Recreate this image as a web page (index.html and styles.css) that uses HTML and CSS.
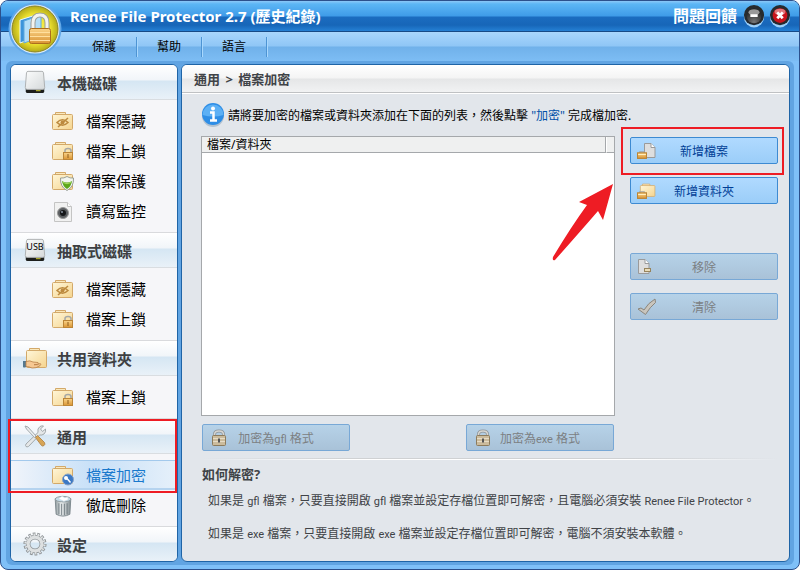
FILE: index.html
```
<!DOCTYPE html>
<html lang="zh-Hant">
<head>
  <meta charset="UTF-8">
  <title>Renee File Protector 2.7</title>
  <link rel="stylesheet" href="styles.css">
</head>
<body>
  <!-- shared icons -->
  <svg class="defs" aria-hidden="true">
    <defs>
      <linearGradient id="g-folder" x1="0" y1="0" x2="1" y2="1">
        <stop offset="0" stop-color="#fff6d8"/>
        <stop offset="1" stop-color="#f5d48e"/>
      </linearGradient>
      <linearGradient id="g-disk" x1="0" y1="0" x2="1" y2="1">
        <stop offset="0" stop-color="#fbfcfc"/>
        <stop offset="1" stop-color="#d5d9da"/>
      </linearGradient>
      <linearGradient id="g-gold" x1="0" y1="0" x2="0" y2="1">
        <stop offset="0" stop-color="#fbd489"/>
        <stop offset="1" stop-color="#d99434"/>
      </linearGradient>
      <linearGradient id="g-can" x1="0" y1="0" x2="1" y2="0">
        <stop offset="0" stop-color="#8d989c"/>
        <stop offset="0.4" stop-color="#eef1f2"/>
        <stop offset="1" stop-color="#7f8a8f"/>
      </linearGradient>
      <radialGradient id="g-logo" cx="0.5" cy="0.5" r="0.55">
        <stop offset="0" stop-color="#fff566"/>
        <stop offset="0.6" stop-color="#ece02e"/>
        <stop offset="1" stop-color="#a39a12"/>
      </radialGradient>
      <radialGradient id="g-dark" cx="0.5" cy="0.9" r="0.9">
        <stop offset="0" stop-color="#777"/>
        <stop offset="1" stop-color="#151515"/>
      </radialGradient>
    </defs>
    <symbol id="disk" viewBox="0 0 24 26">
      <path d="M2 20h20v3q0 2-2 2H4q-2 0-2-2z" fill="#1c1e1c"/>
      <path d="M13 22h5" stroke="#a7a52c" stroke-width="2"/>
      <path d="M4.500 1.500h15q1.500 0 1.700 1.500l1.300 16q0 2-2 2h-17q-2 0-2-2L2.800 3Q3 1.500 4.500 1.500z" fill="url(#g-disk)" stroke="#a9adae"/>
    </symbol>
    <symbol id="folder" viewBox="0 0 24 22">
      <path d="M4.500 5V1.500h10V5" fill="#fbe9bd" stroke="#d3a96a"/>
      <rect x="1.500" y="3.500" width="20" height="15" rx="1" fill="url(#g-folder)" stroke="#d3a96a"/>
    </symbol>
    <symbol id="lock" viewBox="0 0 18 18">
      <path d="M4.500 8V5.500Q4.500 2 9 2t4.500 3.500V8" fill="none" stroke="#8f9498" stroke-width="3"/>
      <path d="M4.500 8V5.500Q4.500 2 9 2t4.500 3.500V8" fill="none" stroke="#d6d6d2" stroke-width="1.500"/>
      <rect x="2.500" y="6.500" width="13" height="10" rx="1" fill="#cbbb9c" stroke="#8c7b5c"/>
      <path d="M3 9.500h12M3 12.500h12" stroke="#e6dcc6"/>
      <path d="M9 9.500v4" stroke="#555" stroke-width="2"/>
    </symbol>
    <symbol id="folder-hide" viewBox="0 0 24 22">
      <use href="#folder" width="24" height="22"/>
      <path d="M6 11.500q5.500-5.500 11 0q-5.500 5.500-11 0z" fill="none" stroke="#bd8a3e" stroke-width="1.500"/>
      <circle cx="11.500" cy="11.500" r="2" fill="#bd8a3e"/>
      <path d="M7 16l10-9" stroke="#bd8a3e" stroke-width="1.500"/>
    </symbol>
    <symbol id="folder-lock" viewBox="0 0 24 22">
      <use href="#folder" width="24" height="22"/>
      <path d="M14 12v-2.500q0-2 3-2t3 2V12" fill="none" stroke="#a5a7a5" stroke-width="1.500"/>
      <rect x="12.500" y="11.500" width="9" height="7" fill="url(#g-gold)" stroke="#bb8537"/>
      <path d="M17 13v4" stroke="#8f5f1e"/>
    </symbol>
    <symbol id="folder-shield" viewBox="0 0 24 22">
      <use href="#folder" width="24" height="22"/>
      <path d="M16 5.500q3 2 6.500 1.500q.5 9-6.500 12.500q-7-3.500-6.500-12.500q3.500.5 6.500-1.500z" fill="#f2f5f0" stroke="#999f97"/>
      <path d="M11 10q5 3 10 0q-.5 5-5 8q-4.500-3-5-8z" fill="#5da61c"/>
      <path d="M12 11.500q4 2.500 8 0" stroke="#a9dd62" fill="none"/>
    </symbol>
    <symbol id="folder-key" viewBox="0 0 24 22">
      <use href="#folder" width="24" height="22"/>
      <circle cx="17" cy="14.500" r="5.500" fill="#3b78c4" stroke="#8aa5c8"/>
      <circle cx="15" cy="13" r="2" fill="#fff"/>
      <path d="M16 13.500l3.500 4" stroke="#fff" stroke-width="1.500"/>
    </symbol>
    <symbol id="monitor" viewBox="0 0 24 22">
      <path d="M3.500 1.500h13l4 4v15h-17z" fill="#f1f1f1" stroke="#c4c4c4"/>
      <path d="M16.500 1.500v4h4" fill="#fff" stroke="#c4c4c4"/>
      <circle cx="12" cy="12" r="5.500" fill="#5a5d60" stroke="#999"/>
      <circle cx="12" cy="12" r="3" fill="#151719"/>
      <circle cx="11" cy="11" r="1" fill="#8b96a3"/>
    </symbol>
    <symbol id="bin" viewBox="2 0 20 24">
      <path d="M3.500 4l1 17q7.500 4 15 0l1-17z" fill="url(#g-can)" stroke="#7b868b"/>
      <path d="M7.500 9v12M10.500 9.500V22M13.500 9.500V22M16.500 9v12" stroke="#6f7a80"/>
      <ellipse cx="12" cy="4.500" rx="8.500" ry="3" fill="#c5dcea" stroke="#8d989d"/>
      <path d="M7 4l4-3 3 2 3-1 1 3-5 2z" fill="#fff" stroke="#b9cbd6" stroke-width=".6"/>
    </symbol>
    <symbol id="share" viewBox="0 0 26 24">
      <path d="M7.500 5V2.500h10V5" fill="#fbe9bd" stroke="#d3a96a"/>
      <rect x="4.500" y="4.500" width="20" height="17" rx="1" fill="url(#g-folder)" stroke="#d3a96a"/>
      <path d="M1 15v6q1 1 3 0v-6z" fill="#55788f"/>
      <path d="M4 15.500q4-1.500 7 .5l5 .5q1.500 1-1 2l-3 .2q4 .6 6-1.200q2 .5 0 2.200q-4 2.800-8 2.300q-3-1.500-6-1.500z" fill="#f6c893" stroke="#b98049" stroke-width=".8"/>
    </symbol>
    <symbol id="tools" viewBox="0 0 24 24">
      <path d="M3 20L15 8.500q-1-4 2-6q2-1 3.500-.5l-3 3 2 2.500 3-2.500q.8 3-1.500 5q-2 1.500-4.500 1L5.500 22.500q-1.500.7-2.500 0t0-2.500z" fill="#e4e7e8" stroke="#a3aaad"/>
      <path d="M2 2l3 1 8 9-1.500 1.500-8-8.500z" fill="#eceeef" stroke="#a3aaad"/>
      <path d="M12.500 13.500l2-2 7 7q1 2-.5 3t-2.500 0z" fill="#d7a555" stroke="#b58a50"/>
    </symbol>
    <symbol id="gear" viewBox="0 0 26 26">
      <circle cx="13" cy="13" r="10.500" fill="none" stroke="#8d9295" stroke-width="4" pathLength="28" stroke-dasharray="1.200 .8"/>
      <circle cx="13" cy="13" r="7.500" fill="none" stroke="#8d9295" stroke-width="5"/>
      <circle cx="13" cy="13" r="10" fill="none" stroke="#e0e3e4" stroke-width="3" pathLength="28" stroke-dasharray=".7 1.300" stroke-dashoffset="-.25"/>
      <circle cx="13" cy="13" r="7.500" fill="none" stroke="#dde0e1" stroke-width="3.500"/>
    </symbol>
    <symbol id="smalllock" viewBox="0 0 9 8">
      <path d="M2.500 3V1.500h4V3" fill="none" stroke="#a3a3a3"/>
      <rect x=".5" y="2.500" width="8" height="5" fill="url(#g-gold)" stroke="#bb8537"/>
      <path d="M1 4h7" stroke="#fff0c0"/>
    </symbol>
    <symbol id="page" viewBox="0 0 13 15">
      <path d="M1.500.5H8l4 4v10H1.500z" fill="#dedede" stroke="#9a9a9a"/>
      <path d="M8 .5v4h4" fill="#fff" stroke="#9a9a9a"/>
    </symbol>
  </svg>

  <div class="window">
    <header class="titlebar">
      <h1>Renee File Protector 2.7 (歷史紀錄)</h1>
      <a class="feedback" href="#">問題回饋</a>
      <button class="winbtn" aria-label="Minimize">
        <svg viewBox="0 0 24 26"><ellipse cx="12" cy="14" rx="11" ry="11.500" fill="#9bd0fa"/><circle cx="12" cy="12" r="11" fill="#262a2e"/><circle cx="12" cy="13" r="8" fill="url(#g-dark)"/><ellipse cx="12" cy="9" rx="6" ry="3.500" fill="#999"/><path d="M8 12.500h8" stroke="#fff" stroke-width="3"/></svg>
      </button>
      <button class="winbtn" aria-label="Close">
        <svg viewBox="0 0 24 26"><ellipse cx="12" cy="14" rx="11" ry="11.500" fill="#9bd0fa"/><circle cx="12" cy="12" r="11" fill="#262a2e"/><circle cx="12" cy="12.500" r="8" fill="#c9141b"/><ellipse cx="12" cy="8.500" rx="6" ry="3.500" fill="#e0777a"/><path d="M9 9l6 6.500M15 9l-6 6.500" stroke="#fff" stroke-width="3"/></svg>
      </button>
    </header>
    <svg class="logo" viewBox="0 0 54 54">
      <circle cx="27" cy="27" r="26.500" fill="#62a8e8"/>
      <circle cx="27" cy="27" r="24.500" fill="#dcecf8"/>
      <circle cx="27" cy="27" r="23" fill="url(#g-logo)" stroke="#8b8524"/>
      <path d="M12 18l16-5v22l-16 6z" fill="#3d94da" stroke="#eaf6ff"/>
      <path d="M16 19l17-6v22l-17 6z" fill="#b4def8" stroke="#5fa9de"/>
      <path d="M25 27v-6q0-8 7-8t7 8v6" fill="none" stroke="#9b9d98" stroke-width="5"/>
      <path d="M25 27v-6q0-8 7-8t7 8v6" fill="none" stroke="#f3f3ee" stroke-width="3"/>
      <rect x="21.500" y="26.500" width="21" height="15" rx="2" fill="url(#g-gold)" stroke="#ad6d1d"/>
      <path d="M22 30.500h20M22 34.500h20M22 38.500h20" stroke="#ffdf9e"/>
    </svg>
    <nav class="menubar">
      <button>保護</button>
      <button>幫助</button>
      <button>語言</button>
    </nav>

    <div class="body">
      <aside class="panel sidebar">
        <section class="group">
          <h2><svg class="head-icon"><use href="#disk"/></svg>本機磁碟</h2>
          <ul>
            <li><a href="#"><svg><use href="#folder-hide"/></svg>檔案隱藏</a></li>
            <li><a href="#"><svg><use href="#folder-lock"/></svg>檔案上鎖</a></li>
            <li><a href="#"><svg><use href="#folder-shield"/></svg>檔案保護</a></li>
            <li><a href="#"><svg><use href="#monitor"/></svg>讀寫監控</a></li>
          </ul>
        </section>
        <section class="group">
          <h2><span class="usb"><svg class="head-icon"><use href="#disk"/></svg><span>USB</span></span>抽取式磁碟</h2>
          <ul>
            <li><a href="#"><svg><use href="#folder-hide"/></svg>檔案隱藏</a></li>
            <li><a href="#"><svg><use href="#folder-lock"/></svg>檔案上鎖</a></li>
          </ul>
        </section>
        <section class="group">
          <h2><svg class="head-icon"><use href="#share"/></svg>共用資料夾</h2>
          <ul>
            <li><a href="#"><svg><use href="#folder-lock"/></svg>檔案上鎖</a></li>
          </ul>
        </section>
        <section class="group marked">
          <h2><svg class="head-icon"><use href="#tools"/></svg>通用</h2>
          <ul>
            <li><a class="active" href="#"><svg><use href="#folder-key"/></svg>檔案加密</a></li>
            <li><a href="#"><svg><use href="#bin"/></svg>徹底刪除</a></li>
          </ul>
        </section>
        <section class="group">
          <h2><svg class="head-icon"><use href="#gear"/></svg>設定</h2>
        </section>
      </aside>

      <main class="panel main">
        <div class="crumbs">通用 <span>&gt;</span> 檔案加密</div>
        <div class="content">
          <p class="info">
            <svg viewBox="0 0 24 26"><ellipse cx="12" cy="14" rx="11" ry="11" fill="#b3c2d0"/><circle cx="12" cy="12" r="11" fill="#2e8ee6"/><path d="M1.500 13a10.500 10.500 0 0 1 21 0q-10 3-21 0z" fill="#5cb0f5"/><circle cx="12" cy="6.500" r="2" fill="#fff"/><path d="M9 10.500h3.500V18M9 18.500h7" stroke="#fff" stroke-width="2.500" fill="none"/></svg>
            <span>請將要加密的檔案或資料夾添加在下面的列表，然後點擊 <b>"加密"</b> 完成檔加密.</span>
          </p>
          <div class="work">
            <div class="list">
              <table>
                <thead><tr><th>檔案/資料夾</th><td></td></tr></thead>
              </table>
              <svg class="pointer" viewBox="0 0 62 78"><path d="M61 1L51 37l-5-9Q27 50 3 77q-3 1-2-3Q19 44 35 22l-8-3z" fill="#ee1c24"/></svg>
            </div>
            <div class="actions">
              <button class="btn marked">
                <svg viewBox="0 0 20 18"><use href="#page" x="6" y="1" width="13" height="15"/><use href="#smalllock" x="0" y="8" width="10" height="9"/></svg>
                <span>新增檔案</span>
              </button>
              <button class="btn">
                <svg viewBox="0 0 20 18"><use href="#folder" x="2" y="1" width="18" height="16"/><use href="#smalllock" x="0" y="8" width="10" height="9"/></svg>
                <span>新增資料夾</span>
              </button>
              <button class="btn remove" disabled>
                <svg viewBox="0 0 20 18"><use href="#page" x="0" y="1" width="13" height="15"/><rect x="7.500" y="10.500" width="6" height="3" fill="#e9dcba" stroke="#97845c"/></svg>
                <span>移除</span>
              </button>
              <button class="btn" disabled>
                <svg viewBox="0 0 20 18"><path d="M1 11l3-1 3 2q4-7 11-11l.5 3.500Q13 9 8.500 16.500z" fill="#c9c5bd" stroke="#8a857c"/></svg>
                <span>清除</span>
              </button>
            </div>
          </div>
          <div class="formats">
            <button class="btn" disabled><svg><use href="#lock"/></svg><span>加密為<span class="latin">gfl</span> 格式</span></button>
            <button class="btn" disabled><svg><use href="#lock"/></svg><span>加密為<span class="latin">exe</span> 格式</span></button>
          </div>
          <section class="help">
            <h3>如何解密?</h3>
            <p>如果是 <span class="latin">gfl</span> 檔案，只要直接開啟 <span class="latin">gfl</span> 檔案並設定存檔位置即可解密，且電腦必須安裝 <span class="latin">Renee File Protector</span>。</p>
            <p>如果是 <span class="latin">exe</span> 檔案，只要直接開啟 <span class="latin">exe</span> 檔案並設定存檔位置即可解密，電腦不須安裝本軟體。</p>
          </section>
        </div>
      </main>
    </div>
  </div>
</body>
</html>
```
FILE: styles.css
```
*,
*::before,
*::after {
  box-sizing: border-box;
}

body {
  margin: 0;
  background: #fff;
  font-family: "Noto Sans", "Noto Sans CJK TC", sans-serif;
  font-size: 12px;
  color: #000;
}

h1, h2, h3, p, ul {
  margin: 0;
  padding: 0;
}

a {
  color: inherit;
  text-decoration: none;
}

button {
  font: inherit;
  padding: 0;
  border: 0;
  background: none;
}

svg {
  display: block;
  flex: none;
}

.defs {
  position: absolute;
  width: 0;
  height: 0;
}

.latin {
  font-family: Roboto, sans-serif;
  font-size: 11px;
}

.window {
  position: relative;
  display: flex;
  flex-direction: column;
  min-height: 100vh;
  border: 1px solid #2c508c;
  border-radius: 8px;
  overflow: hidden;
  background: #7fc0f8;
}

/* title bar */
.titlebar {
  display: flex;
  align-items: center;
  height: 31px;
  padding: 0 8px 0 69px;
  color: #fff;
  border-bottom: 1px solid #174a86;
  background: linear-gradient(#8cc8f8 0, #5cb6f5 3px, #3f9be8 15px, #1b6cc0 16px, #1766b8 24px, #2580d4 100%);
}

.titlebar h1 {
  flex: 1;
  font-size: 15px;
  font-weight: bold;
  line-height: 24px;
}

.feedback {
  margin-right: 4px;
  font-size: 16px;
  font-weight: bold;
  line-height: 24px;
}

.winbtn {
  width: 22px;
  height: 24px;
  margin-left: 2px;
}

.winbtn svg {
  width: 22px;
  height: 24px;
}

.winbtn + .winbtn {
  margin-left: 4px;
}

.logo {
  position: absolute;
  left: 7px;
  top: 1px;
  width: 54px;
  height: 54px;
}

/* menu */
.menubar {
  display: flex;
  align-items: center;
  height: 29px;
  padding-left: 71px;
  background: linear-gradient(#a9d6fc 0, #8fc6f6 14px, #70b1ea 15px, #7dbdf4 100%);
}

.menubar button {
  width: 65px;
  height: 20px;
  line-height: 18px;
  border-right: 1px solid #4d94d4;
  box-shadow: 1px 0 #a9d8fd;
}

/* panels */
.body {
  display: flex;
  flex: 1;
  gap: 3px;
  margin: 0 5px 4px;
  padding: 3px 4px;
  border-radius: 6px;
  background: #61a4e2;
}

.panel {
  border: 1px solid #1f64a6;
  border-radius: 6px;
}

.sidebar {
  flex: none;
  width: 168px;
  background: #f6f6f9;
}

.group {
  border-bottom: 1px solid #d9dadd;
}

.group h2 {
  display: flex;
  align-items: center;
  gap: 9px;
  height: 35px;
  padding-left: 11px;
  font-size: 15px;
  font-weight: bold;
  color: #3d3f42;
  border-bottom: 1px solid #d9dde1;
  background: linear-gradient(#fff 0, #f1f5f9 15px, #d5e6f3 16px, #e9f1f8 100%);
}

.group:first-child h2 {
  border-radius: 5px 5px 0 0;
}

.group:last-child {
  border-bottom: 0;
}

.group:last-child h2 {
  height: 34px;
  border-bottom: 0;
  border-radius: 0 0 5px 5px;
}

.head-icon {
  width: 26px;
  height: 24px;
}

.usb {
  position: relative;
}

.usb span {
  position: absolute;
  left: 0;
  top: 2px;
  width: 26px;
  font-size: 9px;
  font-weight: normal;
  line-height: 14px;
  text-align: center;
  color: #000;
}

.group ul {
  padding: 6px 0;
  list-style: none;
}

.group li a {
  display: flex;
  align-items: center;
  gap: 11px;
  height: 30px;
  padding: 0 0 1px 40px;
  font-size: 15px;
}

.group li svg {
  width: 24px;
  height: 22px;
  margin-top: 2px;
}

.group li a.active {
  padding-bottom: 0;
  color: #1878cc;
  border-top: 1px solid #a3c9ec;
  border-bottom: 2px solid #b5d3ef;
  background: linear-gradient(90deg, #f0f4fa, #c7e0f8 50%, #e6f0fa);
}

/* red callouts */
.marked {
  position: relative;
}

.marked::after {
  content: '';
  position: absolute;
  border: 2px solid #ee1c24;
  pointer-events: none;
}

.group.marked::after {
  left: -3px;
  right: 0;
  top: 0;
  height: 74px;
}

.btn.marked::after {
  left: -10px;
  right: -7px;
  top: -11px;
  bottom: -12px;
}

/* main area */
.main {
  flex: 1;
  min-width: 0;
  background: #e2e6eb;
}

.crumbs {
  height: 28px;
  padding-left: 12px;
  font-size: 13px;
  font-weight: bold;
  line-height: 28px;
  color: #404347;
  border-bottom: 1px solid #bfc1c3;
  border-radius: 5px 5px 0 0;
  box-shadow: 0 1px #fff;
  background: linear-gradient(#fff 0, #f4f4f4 13px, #e5e6e7 14px, #f1f2f3 100%);
}

.crumbs span {
  padding: 0 2px;
}

.content {
  padding: 10px 11px 0 19px;
}

.info {
  display: flex;
  align-items: center;
  gap: 3px;
  height: 24px;
}

.info svg {
  width: 24px;
  height: 26px;
}

.info b {
  font-weight: normal;
  color: #0050a8;
}

.work {
  display: flex;
  gap: 15px;
  margin-top: 9px;
}

.list {
  position: relative;
  flex: 1;
  height: 280px;
  border: 1px solid #a5a8ab;
  background: #fff;
}

.list table {
  width: 100%;
  border-collapse: separate;
  border-spacing: 0;
}

.list th,
.list td {
  height: 16px;
  padding: 0 5px;
  font-weight: normal;
  line-height: 15px;
  text-align: left;
  background: #eff0f0;
  border-bottom: 1px solid #a5a8ab;
}

.list th {
  border-right: 1px solid #a5a8ab;
}

.list td {
  width: 8px;
  padding: 0;
  border-left: 1px solid #fff;
}

.pointer {
  position: absolute;
  right: 0;
  top: 46px;
  width: 62px;
  height: 78px;
}

.actions {
  display: flex;
  flex-direction: column;
  gap: 13px;
  padding-top: 1px;
}

.btn {
  display: grid;
  grid-template-columns: 20px 1fr 20px;
  align-items: center;
  width: 148px;
  height: 27px;
  padding: 0 6px;
  color: #003e96;
  border: 1px solid #3d8ad2;
  border-radius: 2px;
  background: linear-gradient(#b0daff, #9bcdf8);
}

.btn svg {
  width: 20px;
  height: 18px;
}

.btn:disabled {
  color: #7c8083;
  border-color: #78a8d6;
  background: linear-gradient(#b6d2e8, #a9c2d8);
}

.remove {
  margin-top: 36px;
}

.formats {
  display: flex;
  justify-content: space-between;
  margin: 8px 164px 0 1px;
}

.help {
  margin-top: 7px;
  padding-top: 7px;
  color: #404347;
  background:
    linear-gradient(90deg, transparent, #cfd1d3 25%, #cfd1d3 75%, transparent) 0 0 / 100% 1px no-repeat,
    linear-gradient(90deg, transparent, #fff 25%, #fff 75%, transparent) 0 1px / 100% 1px no-repeat;
}

.help h3 {
  padding-left: 1px;
  font-size: 13px;
  line-height: 18px;
}

.help p {
  padding-left: 7px;
  line-height: 32px;
}

.help h3 + p {
  margin-top: 2px;
}
```
